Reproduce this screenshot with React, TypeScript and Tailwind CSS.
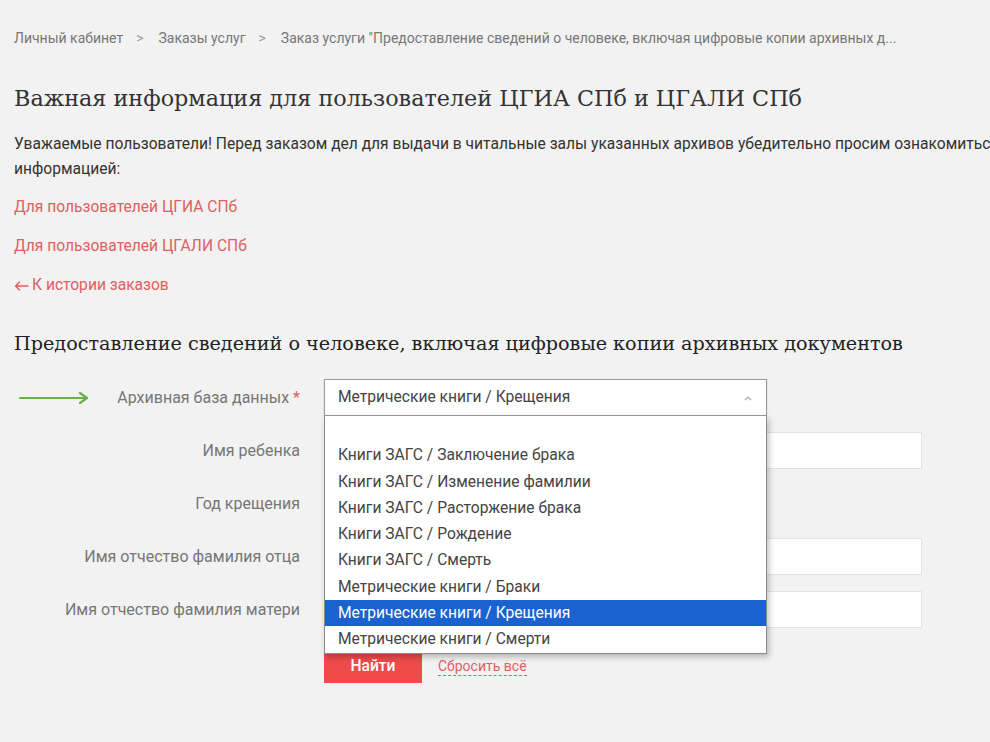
import React from 'react';

const options = [
  '',
  'Книги ЗАГС / Заключение брака',
  'Книги ЗАГС / Изменение фамилии',
  'Книги ЗАГС / Расторжение брака',
  'Книги ЗАГС / Рождение',
  'Книги ЗАГС / Смерть',
  'Метрические книги / Браки',
  'Метрические книги / Крещения',
  'Метрические книги / Смерти',
];

const Label: React.FC<{ children: React.ReactNode }> = ({ children }) => (
  <div className="w-[286px] shrink-0 text-right text-[16px] text-[#777]">{children}</div>
);

export default function App() {
  const selected = 'Метрические книги / Крещения';
  return (
    <div className="w-[990px] h-[742px] overflow-hidden bg-[#f2f2f2] font-['Roboto','Liberation_Sans',sans-serif] text-[#333]">
      <div className="w-[1100px] pl-[14px] pt-[29px]">
        {/* Breadcrumbs */}
        <nav className="flex items-center text-[14px] text-[#777] leading-[18px]">
          <span>Личный кабинет</span>
          <span className="ml-[13px] mr-[15px] text-[#999]">&gt;</span>
          <span>Заказы услуг</span>
          <span className="ml-[13px] mr-[15px] text-[#999]">&gt;</span>
          <span>Заказ услуги "Предоставление сведений о человеке, включая цифровые копии архивных д...</span>
        </nav>

        <h1 className="mt-[37px] font-['DejaVu_Serif',serif] text-[22.3px] leading-[28px] text-[#333]">
          Важная информация для пользователей ЦГИА СПб и ЦГАЛИ СПб
        </h1>

        <p className="mt-[20px] w-[1080px] text-[15.6px] leading-[25px]">
          Уважаемые пользователи! Перед заказом дел для выдачи в читальные залы указанных архивов убедительно просим ознакомиться с
          информацией:
        </p>

        <div className="mt-[13px] flex flex-col gap-[14px] text-[15.6px] leading-[25px] text-[#e0605f]">
          <a>Для пользователей ЦГИА СПб</a>
          <a>Для пользователей ЦГАЛИ СПб</a>
          <a className="flex items-center gap-[3px]">
            <svg width="15" height="10" viewBox="0 0 15 10">
              <path d="M14 5 H1.5 M5.5 1 L1.5 5 L5.5 9" fill="none" stroke="#e0605f" strokeWidth="1.4" strokeLinecap="round" strokeLinejoin="round" />
            </svg>
            К истории заказов
          </a>
        </div>

        <h2 className="mt-[34px] font-['DejaVu_Serif',serif] text-[19.2px] leading-[24px] text-[#222]">
          Предоставление сведений о человеке, включая цифровые копии архивных документов
        </h2>

        {/* Form */}
        <div className="mt-[23px] flex flex-col gap-[16px]">
          <div className="flex items-center">
            <div className="relative w-[286px] shrink-0 text-right text-[16px] text-[#777]">
              <svg className="absolute left-[5px] top-1/2 -translate-y-1/2" width="72" height="14" viewBox="0 0 72 14">
                <path d="M1 7 H68 M61 2 L68 7 L61 12" fill="none" stroke="#6ab04c" strokeWidth="2.2" strokeLinecap="round" strokeLinejoin="round" />
              </svg>
              Архивная база данных <span className="text-[#e0605f]">*</span>
            </div>
            <div className="relative ml-[24px] w-[443px]">
              <div className="flex h-[37px] items-center justify-between border border-[#9a9a9a] bg-white pl-[13px] pr-[14px] text-[15.6px] text-[#444] shadow-[0_1px_2px_rgba(0,0,0,0.15)]">
                <span>{selected}</span>
                <svg width="8" height="6" viewBox="0 0 8 6">
                  <path d="M1 5 L4 2 L7 5" fill="none" stroke="#aaa" strokeWidth="1.2" />
                </svg>
              </div>
              <ul className="absolute left-0 top-[37px] z-10 w-[443px] border border-[#8c8c8c] border-t-0 bg-white text-[15.6px] text-[#444] shadow-[2px_3px_6px_rgba(0,0,0,0.25)]">
                {options.map((o, i) => (
                  <li
                    key={i}
                    className={`h-[26.3px] pl-[13px] leading-[26px] ${
                      o === selected ? 'bg-[#1b62d1] text-white' : ''
                    }`}
                  >
                    {o}
                  </li>
                ))}
              </ul>
            </div>
          </div>

          <div className="flex items-center">
            <Label>Имя ребенка</Label>
            <div className="ml-[24px] h-[37px] w-[598px] border border-[#e3e3e3] bg-white" />
          </div>

          <div className="flex items-center">
            <Label>Год крещения</Label>
            <div className="ml-[24px] h-[37px] w-[150px] border border-[#e3e3e3] bg-white" />
          </div>

          <div className="flex items-center">
            <Label>Имя отчество фамилия отца</Label>
            <div className="ml-[24px] h-[37px] w-[598px] border border-[#e3e3e3] bg-white" />
          </div>

          <div className="flex items-center">
            <Label>Имя отчество фамилия матери</Label>
            <div className="ml-[24px] h-[37px] w-[598px] border border-[#e3e3e3] bg-white" />
          </div>

          <div className="mt-[6px] ml-[310px] flex items-center gap-[16px]">
            <button className="h-[33px] w-[98px] bg-[#f04a4a] text-[15.6px] font-medium text-white">Найти</button>
            <span className="border-b border-dashed border-[#e0605f] text-[14px] leading-[17px] text-[#e0605f]">
              Сбросить всё
            </span>
          </div>
        </div>
      </div>
    </div>
  );
}
